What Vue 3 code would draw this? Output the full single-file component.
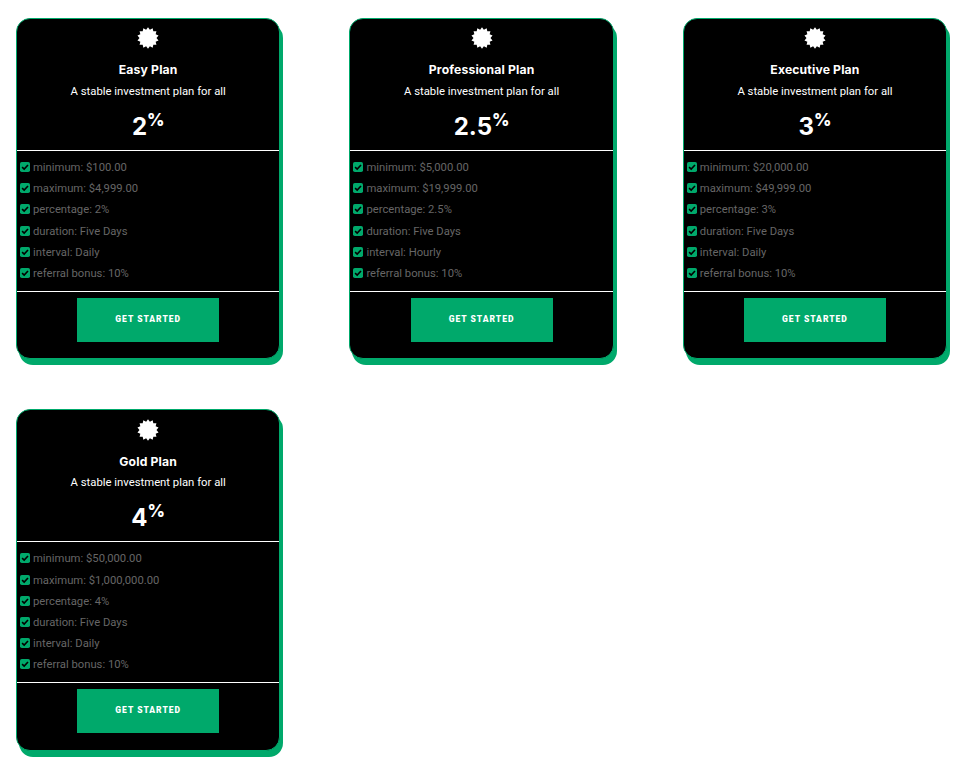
<script setup>
const plans = [
  { name: 'Easy Plan', rate: '2', min: '$100.00', max: '$4,999.00', interval: 'Daily' },
  { name: 'Professional Plan', rate: '2.5', min: '$5,000.00', max: '$19,999.00', interval: 'Hourly' },
  { name: 'Executive Plan', rate: '3', min: '$20,000.00', max: '$49,999.00', interval: 'Daily' },
  { name: 'Gold Plan', rate: '4', min: '$50,000.00', max: '$1,000,000.00', interval: 'Daily' },
]
const rows = (p) => [
  `minimum: ${p.min}`,
  `maximum: ${p.max}`,
  `percentage: ${p.rate}%`,
  'duration: Five Days',
  `interval: ${p.interval}`,
  'referral bonus: 10%',
]
const badge = (() => {
  const pts = []
  const n = 14
  for (let i = 0; i < n * 2; i++) {
    const r = i % 2 ? 8.5 : 10.8
    const a = (Math.PI * i) / n
    pts.push(`${(11 + r * Math.sin(a)).toFixed(2)},${(11 - r * Math.cos(a)).toFixed(2)}`)
  }
  return pts.join(' ')
})()
</script>

<template>
  <div class="page">
    <div v-for="p in plans" :key="p.name" class="card">
      <div class="head">
        <svg class="badge" width="22" height="22" viewBox="0 0 22 22"><polygon :points="badge" fill="#fff" /></svg>
        <h3 class="name">{{ p.name }}</h3>
        <p class="sub">A stable investment plan for all</p>
        <div class="rate">{{ p.rate }}<sup class="pct">%</sup></div>
      </div>
      <ul class="list">
        <li v-for="r in rows(p)" :key="r" class="row">
          <svg class="check" width="10" height="10" viewBox="0 0 10 10">
            <rect width="10" height="10" rx="1.8" fill="#00a96b" />
            <path d="M2.1 5.1 4.2 7.1 8 3" fill="none" stroke="#000" stroke-width="1.6" />
          </svg>
          <span>{{ r }}</span>
        </li>
      </ul>
      <div class="foot">
        <a class="btn">GET STARTED</a>
      </div>
    </div>
  </div>
</template>

<style>
html, body { margin: 0; background: #fff; }
</style>

<style scoped>
.page {
  width: 965px;
  height: 770px;
  box-sizing: border-box;
  padding: 18px 0 0 16px;
  display: grid;
  grid-template-columns: repeat(3, 264.4px);
  column-gap: 69px;
  grid-auto-rows: 341.3px;
  row-gap: 50px;
  font-family: Roboto, sans-serif;
}
.card {
  box-sizing: border-box;
  height: 341.3px;
  background: #000;
  border: 1px solid #00a96b;
  border-radius: 14px;
  box-shadow: 3px 6px 0 #00a96b;
  display: flex;
  flex-direction: column;
  overflow: hidden;
}
.head {
  height: 132px;
  box-sizing: border-box;
  border-bottom: 1px solid #fff;
  display: flex;
  flex-direction: column;
  align-items: center;
  padding-top: 8.4px;
  color: #fff;
}
.badge { display: block; }
.name {
  margin: 13px 0 0;
  font: 700 12.2px/16px Inter, sans-serif;
  letter-spacing: 0.15px;
}
.sub {
  margin: 5.6px 0 0;
  font-size: 11.3px;
  line-height: 16px;
}
.rate {
  margin-top: 12px;
  font: 700 24px/30px Inter, sans-serif;
}
.pct {
  font-size: 17px;
  font-weight: 800;
  line-height: 0;
  vertical-align: 9px;
}
.list {
  list-style: none;
  margin: 0;
  padding: 6px 0 0 3px;
  height: 141px;
  box-sizing: border-box;
  border-bottom: 1px solid #fff;
}
.row {
  display: flex;
  align-items: center;
  gap: 3px;
  height: 21.2px;
  font-size: 11.25px;
  color: #666;
}
.check { flex: none; margin-bottom: 1px; }
.foot {
  display: flex;
  justify-content: center;
  padding-top: 6px;
}
.btn {
  width: 142px;
  height: 44px;
  background: #00a96b;
  color: #fff;
  font-size: 8.5px;
  font-weight: 900;
  letter-spacing: 1px;
  display: flex;
  align-items: center;
  justify-content: center;
  padding-bottom: 2px;
  box-sizing: border-box;
}
</style>
